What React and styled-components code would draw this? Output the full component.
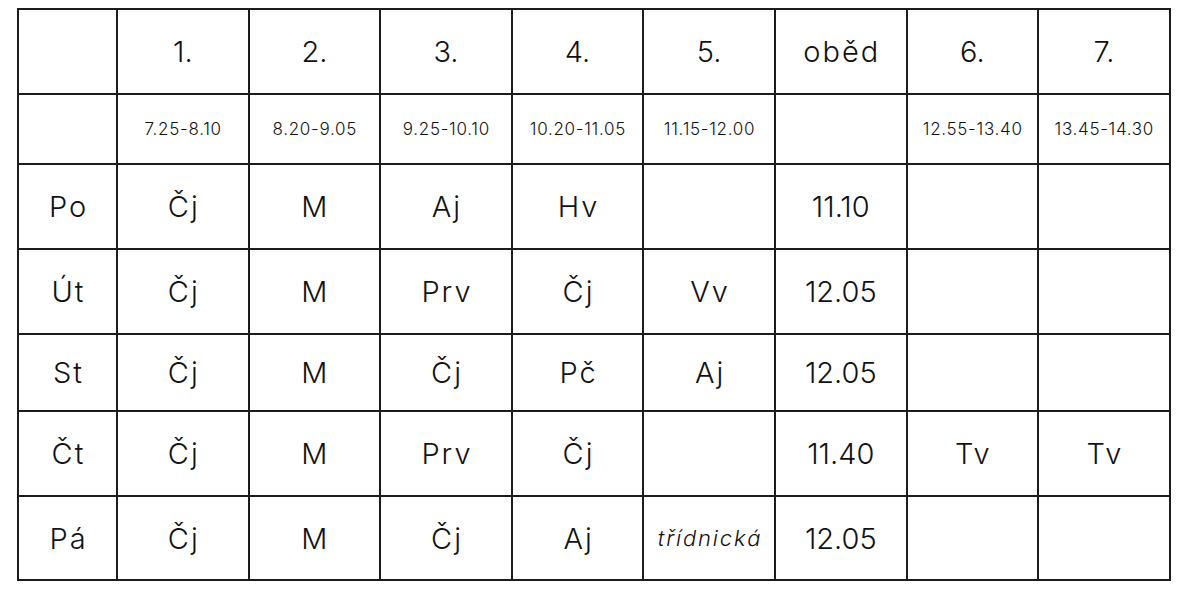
import React from "react";
import styled, { createGlobalStyle } from "styled-components";

const Global = createGlobalStyle`
  html, body { margin: 0; padding: 0; background: #fff; }
  body { font-family: Inter, "Open Sans", sans-serif; color: #111; }
`;

const Page = styled.div`
  padding: 8px 14px 0 17px;
`;

const Table = styled.table`
  border-collapse: collapse;
  table-layout: fixed;
  width: 1152px;
`;

const Cell = styled.td`
  border: 2px solid #1c1c1c;
  text-align: center;
  vertical-align: middle;
  padding: 0;
  font-weight: 300;
  font-size: 29px;
  letter-spacing: ${(p) => (p.$num ? "0px" : "2px")};
  text-indent: ${(p) => (p.$num ? "0px" : "2px")};
`;

const TimeCell = styled(Cell)`
  font-size: 17px;
  letter-spacing: 0.7px;
  text-indent: 0.7px;
`;

const NoteCell = styled(Cell)`
  font-style: italic;
  font-size: 22px;
  letter-spacing: 1.8px;
  text-indent: 1.8px;
`;

const Row = styled.tr`
  height: ${(p) => p.$h}px;
`;

const heads = ["", "1.", "2.", "3.", "4.", "5.", "oběd", "6.", "7."];
const times = ["", "7.25-8.10", "8.20-9.05", "9.25-10.10", "10.20-11.05", "11.15-12.00", "", "12.55-13.40", "13.45-14.30"];
const days = [
  { h: 85, c: ["Po", "Čj", "M", "Aj", "Hv", "", "11.10", "", ""] },
  { h: 85, c: ["Út", "Čj", "M", "Prv", "Čj", "Vv", "12.05", "", ""] },
  { h: 77, c: ["St", "Čj", "M", "Čj", "Pč", "Aj", "12.05", "", ""] },
  { h: 85, c: ["Čt", "Čj", "M", "Prv", "Čj", "", "11.40", "Tv", "Tv"] },
  { h: 84, c: ["Pá", "Čj", "M", "Čj", "Aj", "třídnická", "12.05", "", ""] },
];

const isNum = (t) => /^[0-9.]+$/.test(t);

export default function App() {
  return (
    <Page>
      <Global />
      <Table>
        <colgroup>
          <col style={{ width: 99 }} />
          {heads.slice(1).map((_, i) => (
            <col key={i} style={{ width: 131.6 }} />
          ))}
        </colgroup>
        <tbody>
          <Row $h={85}>
            {heads.map((t, i) => (
              <Cell key={i} $num={isNum(t)}>{t}</Cell>
            ))}
          </Row>
          <Row $h={70}>
            {times.map((t, i) => (
              <TimeCell key={i}>{t}</TimeCell>
            ))}
          </Row>
          {days.map((d, r) => (
            <Row key={r} $h={d.h}>
              {d.c.map((t, i) =>
                t === "třídnická" ? (
                  <NoteCell key={i}>{t}</NoteCell>
                ) : (
                  <Cell key={i} $num={isNum(t)}>{t}</Cell>
                )
              )}
            </Row>
          ))}
        </tbody>
      </Table>
    </Page>
  );
}
